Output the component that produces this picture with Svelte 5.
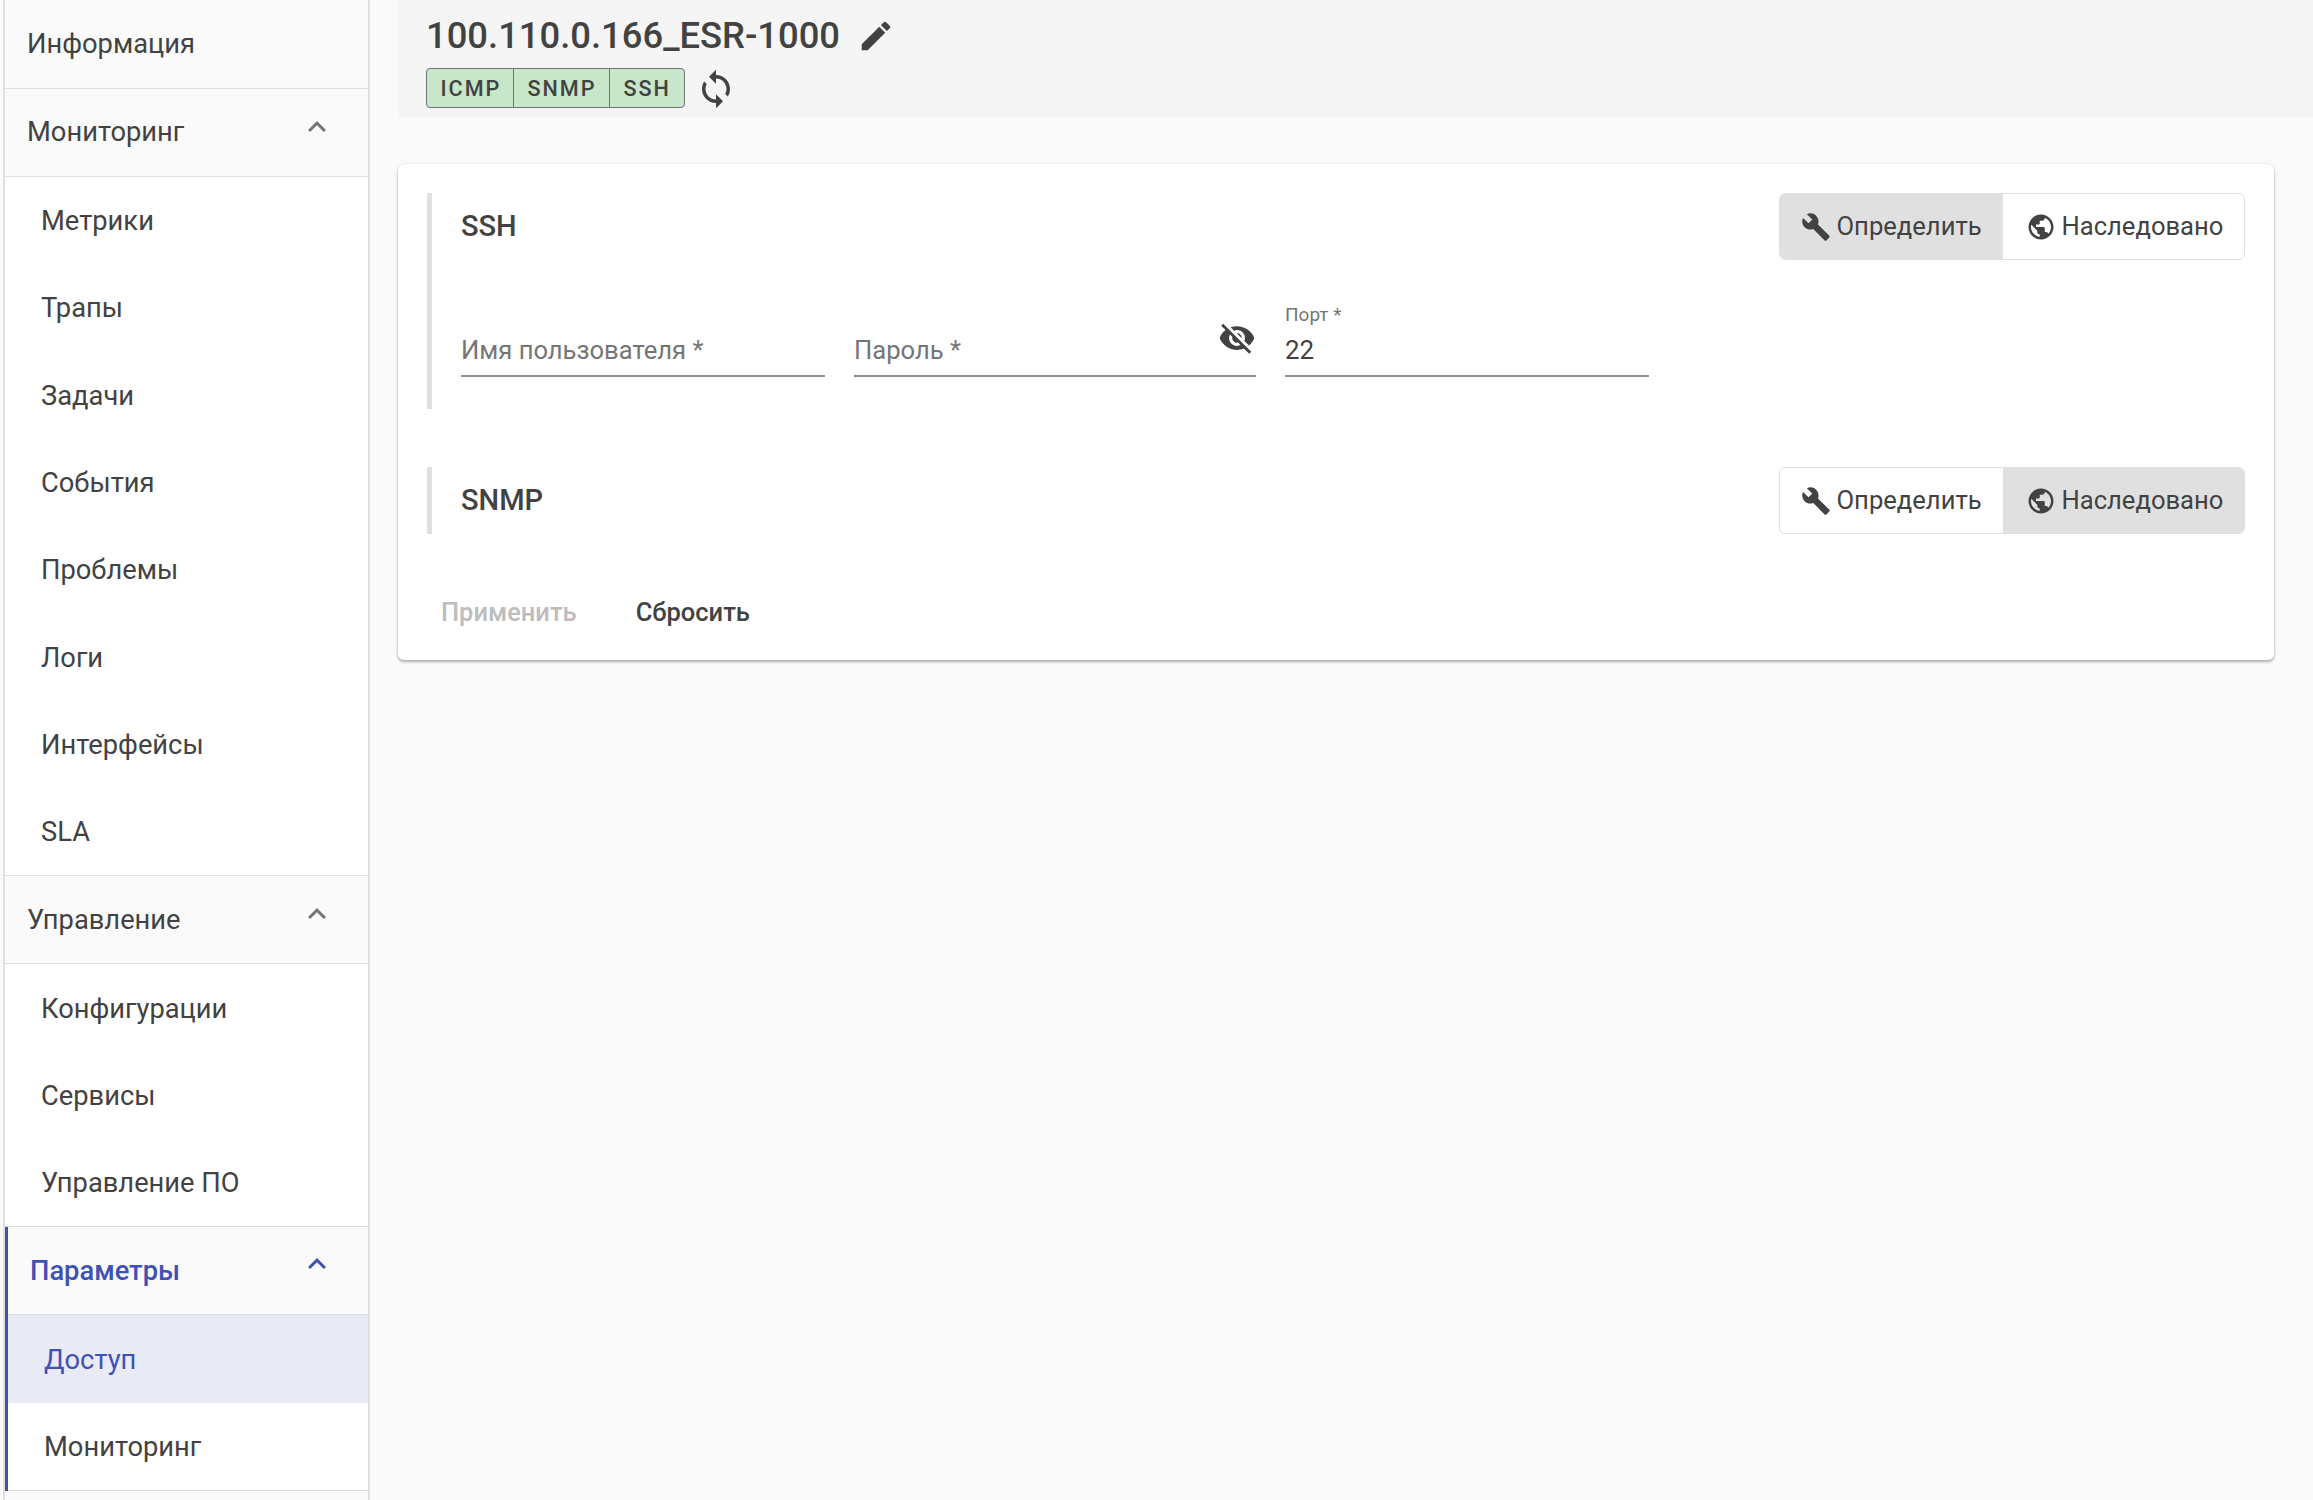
<script>
  const paths = {
    less: 'M12 8l-6 6 1.41 1.41L12 10.83l4.59 4.58L18 14z',
    edit: 'M3 17.25V21h3.75L17.81 9.94l-3.75-3.75L3 17.25zM20.71 7.04c.39-.39.39-1.02 0-1.41l-2.34-2.34a.9959.9959 0 0 0-1.41 0l-1.83 1.83 3.75 3.75 1.83-1.83z',
    sync: 'M12 4V1L8 5l4 4V6c3.31 0 6 2.69 6 6 0 1.01-.25 1.97-.7 2.8l1.46 1.46C19.54 15.03 20 13.57 20 12c0-4.42-3.58-8-8-8zm0 14c-3.31 0-6-2.69-6-6 0-1.01.25-1.97.7-2.8L5.24 7.74C4.46 8.97 4 10.43 4 12c0 4.42 3.58 8 8 8v3l4-4-4-4v3z',
    build: 'M22.7 19l-9.1-9.1c.9-2.3.4-5-1.5-6.9-2-2-5-2.4-7.4-1.3L9 6 6 9 1.6 4.7C.4 7.1.9 10.1 2.9 12.1c1.9 1.9 4.6 2.4 6.9 1.5l9.1 9.1c.4.4 1 .4 1.4 0l2.3-2.3c.5-.4.5-1.1.1-1.4z',
    globe: 'M12 2C6.48 2 2 6.48 2 12s4.48 10 10 10 10-4.48 10-10S17.52 2 12 2zm-1 17.93c-3.95-.49-7-3.85-7-7.93 0-.62.08-1.21.21-1.79L9 15v1c0 1.1.9 2 2 2v1.93zm6.9-2.54c-.26-.81-1-1.39-1.9-1.39h-1v-3c0-.55-.45-1-1-1H8v-2h2c.55 0 1-.45 1-1V7h2c1.1 0 2-.9 2-2v-.41c2.93 1.19 5 4.06 5 7.41 0 2.08-.8 3.97-2.1 5.39z',
    off: 'M12 7c2.76 0 5 2.24 5 5 0 .65-.13 1.26-.36 1.83l2.92 2.92c1.51-1.26 2.7-2.89 3.43-4.75-1.73-4.39-6-7.5-11-7.5-1.4 0-2.74.25-3.98.7l2.16 2.16C10.74 7.13 11.35 7 12 7zM2 4.27l2.28 2.28.46.46C3.08 8.3 1.78 10.02 1 12c1.73 4.39 6 7.5 11 7.5 1.55 0 3.03-.3 4.38-.84l.42.42L19.73 22 21 20.73 3.27 3 2 4.27zM7.53 9.8l1.55 1.55c-.05.21-.08.43-.08.65 0 1.66 1.34 3 3 3 .22 0 .44-.03.65-.08l1.55 1.55c-.67.33-1.41.53-2.2.53-2.76 0-5-2.24-5-5 0-.79.2-1.53.53-2.2zm4.31-.78l3.15 3.15.02-.16c0-1.66-1.34-3-3-3l-.17.01z'
  };
  const groups = [
    { title: 'Мониторинг', items: ['Метрики','Трапы','Задачи','События','Проблемы','Логи','Интерфейсы','SLA'] },
    { title: 'Управление', items: ['Конфигурации','Сервисы','Управление ПО'] },
    { title: 'Параметры', active: true, items: ['Доступ','Мониторинг'] }
  ];
  const sections = [
    { name: 'SSH', mode: 'define' },
    { name: 'SNMP', mode: 'inherit' }
  ];
</script>

{#snippet icon(d, cls)}
  <svg class={cls} viewBox="0 0 24 24" aria-hidden="true"><path {d} /></svg>
{/snippet}

<div class="page">
  <aside class="sidebar">
    <div class="head first"><span>Информация</span></div>
    {#each groups as g}
      <section class="group" class:active={g.active}>
        <div class="head">
          <span>{g.title}</span>
          {@render icon(paths.less, 'chev')}
        </div>
        <div class="items">
          {#each g.items as item, i}
            <div class="item" class:current={g.active && i === 0}>{item}</div>
          {/each}
        </div>
      </section>
    {/each}
    <div class="tail"></div>
  </aside>

  <main class="main">
    <header class="top">
      <div class="title-row">
        <h1>100.110.0.166_ESR-1000</h1>
        {@render icon(paths.edit, 'edit')}
      </div>
      <div class="status-row">
        <div class="badges">
          <span>ICMP</span><span>SNMP</span><span>SSH</span>
        </div>
        {@render icon(paths.sync, 'sync')}
      </div>
    </header>

    <div class="card">
      {#each sections as s}
        <div class="section">
          <div class="sec-head">
            <h2>{s.name}</h2>
            <div class="toggle">
              <div class="tbtn def" class:on={s.mode === 'define'}>
                {@render icon(paths.build, 'ticon')}<span>Определить</span>
              </div>
              <div class="tbtn inh" class:on={s.mode === 'inherit'}>
                {@render icon(paths.globe, 'ticon')}<span>Наследовано</span>
              </div>
            </div>
          </div>
          {#if s.name === 'SSH'}
            <div class="fields">
              <div class="field user"><span class="ph">Имя пользователя *</span></div>
              <div class="field pass">
                <span class="ph">Пароль *</span>
                {@render icon(paths.off, 'eye')}
              </div>
              <div class="field port">
                <label for="port">Порт *</label>
                <span id="port" class="val">22</span>
              </div>
            </div>
          {/if}
        </div>
      {/each}
      <div class="actions">
        <span class="apply">Применить</span>
        <span class="reset">Сбросить</span>
      </div>
    </div>
  </main>
</div>

<style>
  :global(body) { margin: 0; background: #fafafa; }
  .page {
    display: flex;
    height: 1500px;
    overflow: hidden;
    background: #fafafa;
    color: #424242;
    font-family: Roboto, "Liberation Sans", sans-serif;
    font-size: 27.3px;
  }
  .sidebar {
    box-sizing: border-box;
    width: 367px;
    margin-left: 3px;
    flex: none;
    border-left: 2px solid #e0e0e0;
    border-right: 2px solid #e0e0e0;
    background: #fafafa;
  }
  .head {
    box-sizing: border-box;
    height: 88px;
    padding: 1px 0 0 22px;
    display: flex;
    align-items: center;
    justify-content: space-between;
    border-bottom: 1px solid #e0e0e0;
    position: relative;
    line-height: 1;
  }
  .head.first { height: 89px; }
  .chev {
    width: 36px;
    height: 36px;
    fill: #757575;
    margin: -12px 33px 0 0;
  }
  .items { background: #fff; }
  .item {
    box-sizing: border-box;
    height: 87.3px;
    padding: 1px 0 0 36px;
    display: flex;
    align-items: center;
  }
  .group .items { border-bottom: 1px solid #e0e0e0; }
  .group.active { border-left: 3px solid #3f51b5; }
  .group.active .head { color: #3f51b5; font-weight: 500; }
  .group.active .chev { fill: #3f51b5; margin-top: -14px; }
  .group.active .item { padding-top: 2px; }
  .item.current { background: #e8eaf6; color: #3f51b5; }

  .main { flex: 1; min-width: 0; padding-left: 28px; padding-right: 39px; }
  .top {
    box-sizing: border-box;
    height: 117px;
    margin-right: -39px;
    background: #f5f5f5;
    padding: 14px 0 0 28px;
  }
  .title-row { display: flex; align-items: center; gap: 17px; height: 44px; }
  h1 { margin: 0; font-size: 36.4px; font-weight: 500; line-height: 1; letter-spacing: 0; }
  .edit { width: 38px; height: 38px; fill: #424242; }
  .status-row { display: flex; align-items: center; gap: 10px; margin-top: 9px; }
  .badges {
    display: flex;
    height: 40px;
    box-sizing: border-box;
    border: 1.5px solid #757575;
    border-radius: 4px;
    background: #c8e6c9;
    font-size: 21.6px;
    font-weight: 500;
    letter-spacing: 2px;
  }
  .badges span {
    display: flex;
    align-items: center;
    padding: 0 12.5px 0 13.5px;
    border-left: 1.5px solid #757575;
  }
  .badges span:first-child { border-left: 0; padding-right: 11.5px; }
  .badges span:last-child { padding-right: 13.5px; }
  .sync { width: 42px; height: 42px; fill: #424242; position: relative; top: 1px; }

  .card {
    margin-top: 47px;
    background: #fff;
    border-radius: 6px;
    box-shadow: 0 2px 3px rgba(0,0,0,.3), 0 0 3px rgba(0,0,0,.08);
    padding: 29px 29px 30px 29px;
    box-sizing: border-box;
    height: 496px;
  }
  .section {
    border-left: 5px solid #e0e0e0;
    padding-left: 29px;
    margin-bottom: 58px;
  }
  .sec-head {
    display: flex;
    align-items: center;
    justify-content: space-between;
    height: 67px;
  }
  h2 { margin: 0; font-size: 29px; font-weight: 500; line-height: 1; }
  .toggle {
    display: flex;
    height: 67px;
    box-sizing: border-box;
    border: 1.5px solid #e0e0e0;
    border-radius: 6px;
    overflow: hidden;
  }
  .tbtn {
    display: flex;
    align-items: center;
    gap: 6px;
    font-size: 25.6px;
    padding: 0 22px;
    margin: -1.5px 0;
  }
  .tbtn span { position: relative; top: -1px; }
  .tbtn.on { background: #e0e0e0; }
  .def { width: 224px; box-sizing: border-box; margin-left: -1.5px; }
  .inh { width: 243px; box-sizing: border-box; margin-right: -1.5px; padding-left: 23px; }
  .ticon { width: 30px; height: 30px; fill: #424242; flex: none; }

  .fields {
    display: flex;
    gap: 29px;
    height: 149px;
    padding-top: 58px;
    box-sizing: border-box;
  }
  .field {
    box-sizing: border-box;
    height: 59px;
    border-bottom: 2px solid #8e8e8e;
    position: relative;
    display: flex;
    align-items: flex-end;
    padding-bottom: 9px;
  }
  .user { width: 364px; }
  .pass { width: 402px; justify-content: space-between; }
  .port { width: 364px; }
  .ph { color: #757575; font-size: 25.6px; line-height: 1.2; }
  .val { font-size: 26px; line-height: 1.2; }
  label {
    position: absolute;
    left: 0;
    top: -13px;
    font-size: 19px;
    line-height: 1;
    color: #757575;
  }
  .eye {
    position: absolute;
    right: 0;
    top: 1px;
    width: 38px;
    height: 38px;
    fill: #424242;
  }
  .actions {
    display: flex;
    gap: 59px;
    padding-left: 14px;
    margin-top: 63px;
    font-size: 25.5px;
    font-weight: 500;
  }
  .apply { color: #bdbdbd; }
  .reset { color: #424242; }
</style>
